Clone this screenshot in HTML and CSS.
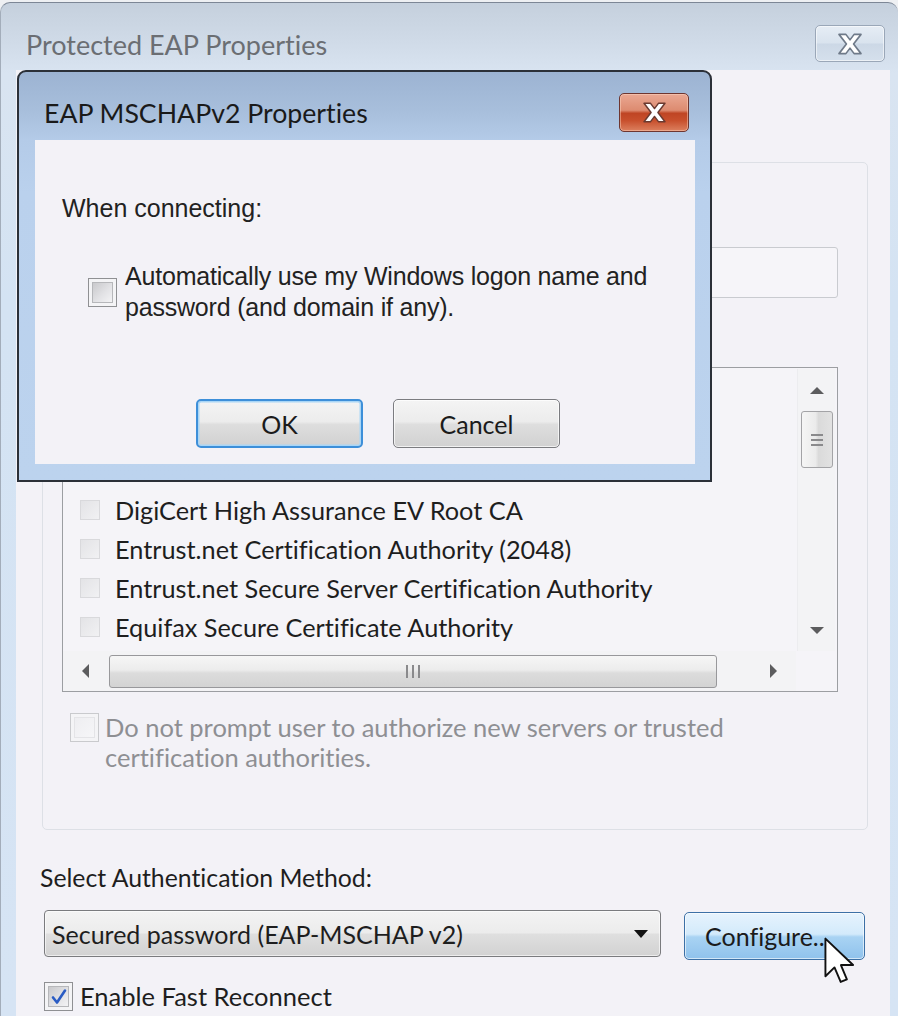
FILE: index.html
```html
<!DOCTYPE html>
<html>
<head>
<meta charset="utf-8">
<title>Protected EAP Properties</title>
<link rel="stylesheet" href="styles.css">
</head>
<body>
<div class="window">
  <div class="titlebar">
    <span class="title">Protected EAP Properties</span>
    <span class="close-btn inactive">
      <svg viewBox="0 0 20 16" width="28" height="22"><path d="M2 1H7L10 5L13 1H18L12.6 8L18 15H13L10 11L7 15H2L7.4 8Z" fill="#ffffff" stroke="#6f7a89" stroke-width="1.2" stroke-linejoin="round"/></svg>
    </span>
  </div>
  <div class="client">
    <div class="groupbox">
      <div class="gb-intro"></div>
      <div class="textbox"></div>
      <div class="gb-label"></div>
      <div class="listbox">
        <div class="list-main">
          <div class="rows">
            <div class="row"><span class="lchk"></span></div>
            <div class="row"><span class="lchk"></span></div>
            <div class="row"><span class="lchk"></span></div>
            <div class="row"><span class="lchk"></span>DigiCert High Assurance EV Root CA</div>
            <div class="row"><span class="lchk"></span>Entrust.net Certification Authority (2048)</div>
            <div class="row"><span class="lchk"></span>Entrust.net Secure Server Certification Authority</div>
            <div class="row"><span class="lchk"></span>Equifax Secure Certificate Authority</div>
          </div>
          <div class="vscroll">
            <div class="varrow"><span class="tri-up"></span></div>
            <div class="vthumb"><span class="vgrip"></span><span class="vgrip"></span><span class="vgrip"></span></div>
            <div class="vtrack"></div>
            <div class="varrow"><span class="tri-down"></span></div>
          </div>
        </div>
        <div class="hscroll-row">
          <div class="harrow"><span class="tri-left"></span></div>
          <div class="hthumb"><span class="hgrip"></span><span class="hgrip"></span><span class="hgrip"></span></div>
          <div class="htrack"></div>
          <div class="harrow"><span class="tri-right"></span></div>
          <div class="corner"></div>
        </div>
      </div>
      <div class="check-row disabled">
        <span class="chk dis"></span>
        <span class="check-text">Do not prompt user to authorize new servers or trusted<br>certification authorities.</span>
      </div>
    </div>
    <div class="method-label">Select Authentication Method:</div>
    <div class="method-row">
      <div class="combo"><span class="combo-text">Secured password (EAP-MSCHAP v2)</span><span class="tri-down dark"></span></div>
      <div class="btn configure">Configure...</div>
    </div>
    <div class="check-row fast">
      <span class="chk checked"><svg viewBox="0 0 20 20" width="20" height="20"><path d="M4 10.5L8 15.5L16 3.5" fill="none" stroke="#2a5cc4" stroke-width="2.6" stroke-linecap="round" stroke-linejoin="round"/></svg></span>
      <span class="fast-text">Enable Fast Reconnect</span>
    </div>
  </div>
</div>

<div class="dialog">
  <div class="dlg-titlebar">
    <span class="dlg-title">EAP MSCHAPv2 Properties</span>
    <span class="close-btn red">
      <svg viewBox="0 0 20 16" width="27" height="21"><path d="M2 1H7L10 5L13 1H18L12.6 8L18 15H13L10 11L7 15H2L7.4 8Z" fill="#ffffff" stroke="#6a3a30" stroke-width="1.1" stroke-linejoin="round"/></svg>
    </span>
  </div>
  <div class="dlg-client">
    <div class="dlg-text">When connecting:</div>
    <div class="dlg-check">
      <span class="chk"></span>
      <span class="dlg-check-text">Automatically use my Windows logon name and<br>password (and domain if any).</span>
    </div>
    <div class="dlg-buttons">
      <div class="btn ok">OK</div>
      <div class="btn cancel">Cancel</div>
    </div>
  </div>
</div>

<svg class="cursor" viewBox="0 0 13 20" width="31" height="48"><path d="M0.6 0.6V16.4L4.4 12.7L7 18.8L9.6 17.7L7.1 11.7H12.2Z" fill="#ffffff" stroke="#111111" stroke-width="0.8" stroke-linejoin="round"/></svg>
</body>
</html>
```

FILE: styles.css
```css
html, body {
  margin: 0;
  padding: 0;
}
body {
  width: 898px;
  height: 1016px;
  overflow: hidden;
  background: #eef0f3;
  font-family: "Lato", "Noto Sans", sans-serif;
  font-variant-ligatures: none;
  color: #1d1d1d;
  position: relative;
}

/* ---------- outer window ---------- */
.window {
  margin-top: 2px;
  height: 1014px;
  box-sizing: border-box;
  border-top: 1px solid #7d8796;
  border-left: 1px solid #a3adba;
  border-radius: 10px 10px 0 0;
  background: linear-gradient(180deg, #c5d0dd 0px, #d0dbe8 40px, #d9e4f1 70px, #d4e3f3 300px, #d6e4f4 100%);
  display: flex;
  flex-direction: column;
}
.titlebar {
  height: 67px;
  flex: none;
  display: flex;
  align-items: flex-start;
  padding: 0 13px 0 25px;
  box-sizing: border-box;
}
.title {
  font-size: 27px;
  line-height: 30px;
  padding-top: 27px;
  color: #6b6e73;
}
.close-btn {
  margin-left: auto;
  display: flex;
  align-items: center;
  justify-content: center;
  box-sizing: border-box;
  border-radius: 5px;
}
.close-btn.inactive {
  margin-top: 22px;
  width: 70px;
  height: 37px;
  border: 1px solid #9aa7b8;
  background: linear-gradient(180deg, #e6edf5 0%, #d9e3ee 48%, #ccd8e6 52%, #d5e0ec 100%);
  box-shadow: inset 0 0 0 1px rgba(255,255,255,0.55);
}
.client {
  flex: 1;
  margin: 0 8px 0 15px;
  background: #f3f2f7;
  display: flex;
  flex-direction: column;
  overflow: hidden;
}

/* ---------- group box ---------- */
.groupbox {
  margin: 92px 22px 0 26px;
  height: 668px;
  flex: none;
  box-sizing: border-box;
  border: 1px solid #dde0e6;
  border-radius: 5px;
  padding: 0 29px 0 19px;
  display: flex;
  flex-direction: column;
}
.gb-intro {
  height: 84px;
  flex: none;
}
.textbox {
  height: 51px;
  flex: none;
  box-sizing: border-box;
  border: 1.5px solid #c9cbd0;
  border-radius: 3px;
  background: #f6f5f9;
}
.gb-label {
  height: 69px;
  flex: none;
}
.listbox {
  height: 325px;
  flex: none;
  box-sizing: border-box;
  border: 1.5px solid #9c9ea2;
  background: #f5f4f8;
  display: flex;
  flex-direction: column;
}
.list-main {
  flex: 1;
  display: flex;
  min-height: 0;
}
.rows {
  flex: 1;
  padding-top: 5px;
  overflow: hidden;
}
.row {
  height: 39px;
  display: flex;
  align-items: center;
  padding-left: 17px;
  font-size: 25.3px;
  color: #1e1e1e;
  white-space: nowrap;
}
.lchk {
  width: 20px;
  height: 20px;
  box-sizing: border-box;
  border: 1px solid #d9d9dc;
  background: linear-gradient(135deg, #e3e3e6, #f1f1f3);
  margin-right: 15px;
  flex: none;
}
.vscroll {
  width: 37px;
  margin: 1px 2px 0 0;
  display: flex;
  flex-direction: column;
  align-items: center;
  background: #f3f3f5;
  border-left: 1px solid #ececef;
}
.varrow {
  height: 42px;
  width: 100%;
  display: flex;
  align-items: center;
  justify-content: center;
}
.vthumb {
  width: 32px;
  height: 57px;
  box-sizing: border-box;
  border: 1px solid #a3a3a6;
  border-radius: 3px;
  background: linear-gradient(90deg, #f5f5f5 0%, #ebebeb 45%, #dadada 55%, #e2e2e2 100%);
  display: flex;
  flex-direction: column;
  align-items: center;
  justify-content: center;
  gap: 3px;
}
.vgrip {
  width: 12px;
  height: 2px;
  background: #8a8a8c;
}
.vtrack { flex: 1; }
.tri-up, .tri-down, .tri-left, .tri-right {
  width: 0;
  height: 0;
  display: block;
}
.tri-up {
  border-left: 7px solid transparent;
  border-right: 7px solid transparent;
  border-bottom: 7px solid #5c5c5e;
}
.tri-down {
  border-left: 7px solid transparent;
  border-right: 7px solid transparent;
  border-top: 7px solid #5c5c5e;
}
.tri-left {
  border-top: 7px solid transparent;
  border-bottom: 7px solid transparent;
  border-right: 7px solid #5c5c5e;
}
.tri-right {
  border-top: 7px solid transparent;
  border-bottom: 7px solid transparent;
  border-left: 7px solid #5c5c5e;
}
.hscroll-row {
  height: 40px;
  flex: none;
  display: flex;
  align-items: center;
  background: #f3f3f5;
}
.harrow {
  width: 45px;
  height: 100%;
  display: flex;
  align-items: center;
  justify-content: center;
}
.hthumb {
  width: 608px;
  height: 33px;
  margin-left: 1px;
  box-sizing: border-box;
  border: 1px solid #98989b;
  border-radius: 3px;
  background: linear-gradient(180deg, #f6f6f6 0%, #ececec 45%, #dcdcdc 55%, #d3d3d3 100%);
  display: flex;
  align-items: center;
  justify-content: center;
  gap: 4px;
}
.hgrip {
  width: 2px;
  height: 13px;
  background: #8a8a8c;
}
.htrack { flex: 1; }
.corner {
  width: 41px;
  height: 100%;
  background: #f5f4f8;
}

/* ---------- checkboxes ---------- */
.chk {
  width: 29px;
  height: 29px;
  flex: none;
  box-sizing: border-box;
  border: 1.5px solid #8f9093;
  background: #f4f4f6;
  padding: 3px;
  display: flex;
  align-items: center;
  justify-content: center;
}
.chk::before {
  content: "";
  display: block;
  width: 100%;
  height: 100%;
  box-sizing: border-box;
  border: 1px solid #b6b7ba;
  background: linear-gradient(135deg, #c9c9cc 0%, #e2e2e5 55%, #f3f3f5 100%);
}
.chk.dis {
  border-color: #c9cacd;
}
.chk.dis::before {
  border-color: #e4e4e7;
  background: linear-gradient(135deg, #eeeef1, #f6f6f8);
}
.chk.checked {
  position: relative;
}
.chk.checked svg {
  position: absolute;
  left: 4px;
  top: 4px;
}
.check-row {
  display: flex;
  align-items: flex-start;
}
.check-row.disabled {
  margin-top: 21px;
  padding-left: 8px;
}
.check-text {
  margin-left: 6px;
  margin-top: -1px;
  font-size: 25.5px;
  line-height: 30px;
  color: #8e8f93;
}

/* ---------- bottom part ---------- */
.method-label {
  margin: 33px 0 0 24px;
  font-size: 24.8px;
  line-height: 30px;
  color: #1e1e1e;
}
.method-row {
  margin-top: 17px;
  display: flex;
  align-items: flex-start;
  padding-left: 28px;
}
.combo {
  width: 617px;
  height: 47px;
  box-sizing: border-box;
  border: 1.5px solid #7a7b7e;
  border-radius: 4px;
  background: linear-gradient(180deg, #f3f3f3 0%, #ececec 48%, #dfdfdf 52%, #d2d2d2 100%);
  box-shadow: inset 0 0 0 1px rgba(255,255,255,0.6);
  display: flex;
  align-items: center;
  padding: 0 12px 0 7px;
}
.combo-text {
  flex: 1;
  font-size: 25px;
  color: #1e1e1e;
}
.tri-down.dark {
  border-left-width: 7px;
  border-right-width: 7px;
  border-top: 8px solid #111;
}
.btn {
  box-sizing: border-box;
  border-radius: 5px;
  display: flex;
  align-items: center;
  justify-content: center;
  font-size: 25px;
  color: #1b1b1b;
}
.btn.configure {
  margin: 2px 0 0 23px;
  width: 181px;
  height: 48px;
  justify-content: flex-start;
  padding-left: 20px;
  border: 1.5px solid #3c70a6;
  background: linear-gradient(180deg, #e6f3fd 0%, #d3eafb 46%, #a9d3f3 52%, #8fc2ec 100%);
  box-shadow: inset 0 0 0 1px rgba(255,255,255,0.6);
}
.check-row.fast {
  margin-top: 21px;
  padding-left: 28px;
  align-items: center;
}
.fast-text {
  margin-left: 7px;
  font-size: 25.5px;
  line-height: 30px;
  color: #1e1e1e;
}

/* ---------- foreground dialog ---------- */
.dialog {
  position: absolute;
  left: 17px;
  top: 70px;
  width: 695px;
  height: 412px;
  box-sizing: border-box;
  border: 2px solid #2b3038;
  border-radius: 9px 9px 0 0;
  background: linear-gradient(180deg, #9cb3d2 0px, #a8bfdc 40px, #b4cbe8 68px, #bad1ed 120px, #bcd3ee 100%);
  padding: 0 15px 16px 16px;
  display: flex;
  flex-direction: column;
}
.dlg-titlebar {
  height: 68px;
  flex: none;
  display: flex;
  align-items: flex-start;
  padding: 0 6px 0 9px;
}
.dlg-title {
  font-size: 26.7px;
  line-height: 32px;
  padding-top: 25px;
  color: #1a1a1a;
}
.close-btn.red {
  margin-top: 21px;
  width: 70px;
  height: 39px;
  border: 1.5px solid #6e3630;
  background: linear-gradient(180deg, #eaa893 0%, #dd8b70 44%, #bf4524 52%, #c8502d 72%, #dc805f 100%);
  box-shadow: inset 0 0 0 1px rgba(255,220,200,0.45);
}
.dlg-client {
  flex: 1;
  background: #f3f2f7;
  display: flex;
  flex-direction: column;
  font-family: "Liberation Sans", Arial, sans-serif;
}
.dlg-text {
  margin: 53px 0 0 27px;
  font-size: 25px;
  line-height: 30px;
  color: #222;
}
.dlg-check {
  margin: 38px 0 0 53px;
  display: flex;
  align-items: center;
}
.dlg-check-text {
  margin-left: 8px;
  font-size: 25px;
  letter-spacing: -0.2px;
  line-height: 31px;
  color: #222;
}
.dlg-buttons {
  margin-top: auto;
  margin-bottom: 16px;
  display: flex;
  justify-content: flex-end;
  gap: 30px;
  padding-right: 135px;
}
.btn.ok, .btn.cancel {
  width: 167px;
  height: 49px;
  font-family: "Lato", "Noto Sans", sans-serif;
  border: 1.5px solid #7b7c80;
  background: linear-gradient(180deg, #f4f4f4 0%, #ececec 46%, #dedede 52%, #d1d1d1 100%);
  box-shadow: inset 0 0 0 1px rgba(255,255,255,0.7);
}
.btn.ok {
  border: 2px solid #3d8fd9;
  box-shadow: inset 0 0 0 1.5px #a9d6f6;
}

/* ---------- mouse cursor ---------- */
.cursor {
  position: absolute;
  left: 824px;
  top: 937px;
}
```
